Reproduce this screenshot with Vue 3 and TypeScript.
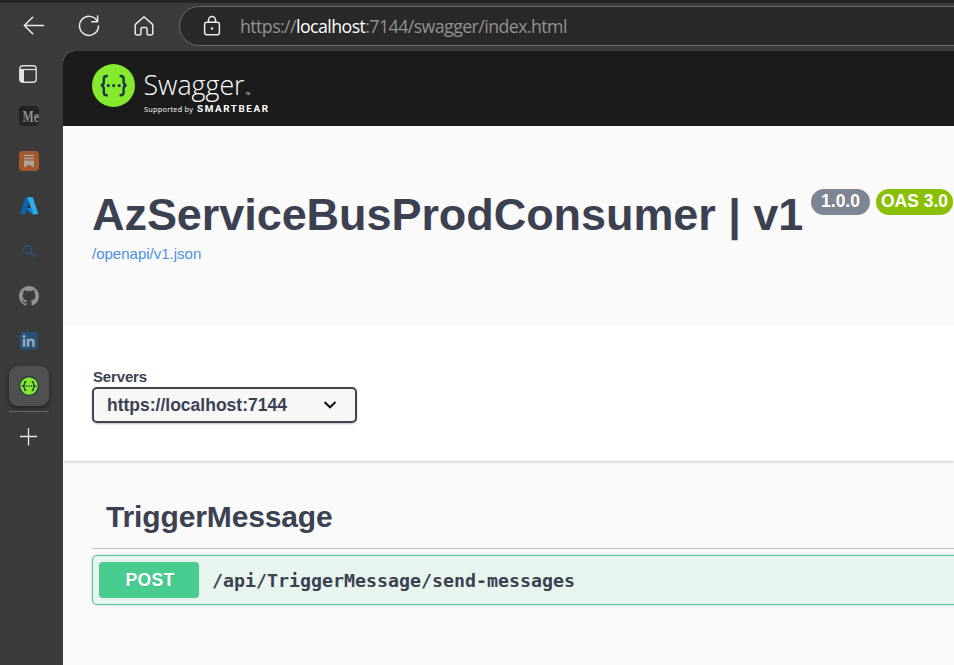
<script setup lang="ts">
interface Badge {
  label: string
  kind: string
}

const host = 'localhost'
const badges: Badge[] = [
  { label: '1.0.0', kind: 'version' },
  { label: 'OAS 3.0', kind: 'oas' },
]
const server = 'https://localhost:7144'
</script>

<template>
  <div class="browser">
    <header class="toolbar">
      <svg class="tool back" width="24" height="24" viewBox="0 0 24 24">
        <path d="M21.500 12.500H2.500M10.700 4.200 2.300 12.500l8.400 8.300" />
      </svg>
      <svg class="tool reload" width="24" height="24" viewBox="0 0 24 24">
        <path d="M20.3 8.2A9.500 9.500 0 1 0 21.500 13M20.600 3v5.800h-5.800" />
      </svg>
      <svg class="tool home" width="24" height="24" viewBox="0 0 24 24">
        <path d="M4.2 10.6 12 3.8l7.8 6.8c.7.6 1 1.3 1 2.2v7.4c0 1.1-.6 1.7-1.7 1.7h-2.5c-1 0-1.5-.6-1.5-1.5v-4.2c0-1.1-.6-1.7-1.7-1.7h-2.8c-1.1 0-1.7.6-1.7 1.7v4.2c0 .9-.5 1.5-1.5 1.5H4.9c-1.1 0-1.7-.6-1.7-1.7v-7.4c0-.9.3-1.6 1-2.2Z" />
      </svg>
      <div class="address">
        <svg class="tool lock" width="20" height="22" viewBox="0 0 20 22">
          <rect x="2.6" y="7.3" width="14.8" height="12.4" rx="2.2" />
          <path d="M6.5 7V5a3.5 3.5 0 0 1 7 0v2" />
          <circle class="dot" cx="10" cy="13.5" r="1.2" />
        </svg>
        <span class="url">https://<b>{{ host }}</b>:7144/swagger/index.html</span>
      </div>
    </header>

    <aside class="tabs">
      <svg class="tab" width="20" height="20" viewBox="0 0 20 20">
        <rect x="0.800" y="0.700" width="16.400" height="16.600" rx="3" fill="none" stroke="#dedede" stroke-width="1.4" />
        <path d="M1 4.500h16.200" stroke="#dedede" stroke-width="1.200" />
        <path d="M.800 4.500H5v13H3.200Q.8 17.500.8 15Z" fill="#e3e3e3" />
      </svg>
      <svg class="tab" width="20" height="20" viewBox="0 0 20 20">
        <rect width="20" height="20" rx="4" fill="#242424" />
        <text class="medium" x="3.500" y="15.500" textLength="16.500" lengthAdjust="spacingAndGlyphs">Me</text>
      </svg>
      <svg class="tab" width="20" height="20" viewBox="0 0 20 20">
        <rect width="20" height="20" rx="4" fill="#a6572d" />
        <path d="M5 4.6h10M5 7.4h10" stroke="#aaa39e" stroke-width="1.5" />
        <path d="M5 9.6h10v6.9l-5-2.8-5 2.8Z" fill="#aaa39e" />
      </svg>
      <svg class="tab" width="20" height="20" viewBox="0 0 20 20">
        <path d="M6.5 1.3h5.2L6 18.2H1.8c-.6 0-.9-.5-.7-1Z" fill="#0b62ad" />
        <path d="M6.8 12h8.3l1.3 6.2h-3Z" fill="#087bd0" />
        <path d="M8.2 1.3h5c.4 0 .7.2.8.6l5 15.1c.2.7-.1 1.2-.8 1.2h-4.9c.6 0 .9-.5.7-1.1Z" fill="#2daeea" />
        <path d="M6.8 12h5.4l1.7 5.1c.1.4 0 .8-.3 1Z" fill="#1480ce" />
      </svg>
      <svg class="tab" width="20" height="20" viewBox="0 0 20 20" fill="none" stroke="#28527a">
        <circle cx="8.400" cy="8.600" r="4" stroke-width="1.600" />
        <path d="m11.400 11.600 4.500 4.800" stroke-width="2" />
      </svg>
      <svg class="tab" width="20" height="20" viewBox="0 0 16 16">
        <path fill="#929292" d="M8 0C3.58 0 0 3.58 0 8c0 3.54 2.29 6.53 5.47 7.59.4.07.55-.17.55-.38 0-.19-.01-.82-.01-1.49-2.01.37-2.53-.49-2.69-.94-.09-.23-.48-.94-.82-1.13-.28-.15-.68-.52-.01-.53.63-.01 1.08.58 1.23.82.72 1.21 1.87.87 2.33.66.07-.52.28-.87.51-1.07-1.78-.2-3.64-.89-3.64-3.95 0-.87.31-1.59.82-2.15-.08-.2-.36-1.02.08-2.12 0 0 .67-.21 2.2.82a7.7 7.7 0 0 1 4 0c1.53-1.04 2.2-.82 2.2-.82.44 1.1.16 1.92.08 2.12.51.56.82 1.27.82 2.15 0 3.07-1.87 3.75-3.65 3.95.29.25.54.73.54 1.48 0 1.07-.01 1.93-.01 2.2 0 .21.15.46.55.38A8.01 8.01 0 0 0 16 8c0-4.42-3.58-8-8-8Z" />
      </svg>
      <svg class="tab" width="20" height="20" viewBox="0 0 20 20">
        <rect x="1" y="1" width="17.6" height="17.6" rx="1.6" fill="#27527e" />
        <path d="M3.8 7.8h2.5v8H3.8ZM7.8 7.8h2.4v1.1c1.2-2 5.5-1.9 5.5 1.9v5h-2.5v-4.3c0-2.4-2.9-2.2-2.9 0v4.3H7.8Z" fill="#9da6af" />
        <circle cx="5" cy="5.2" r="1.5" fill="#9da6af" />
      </svg>
      <div class="active-tab">
        <svg width="20" height="20" viewBox="0 0 44 44">
          <circle cx="22" cy="22" r="20.5" fill="#85ea2d" stroke="#173647" stroke-width="2.6" />
          <path class="braces" d="M16 12c-4 0-4 2-4 5s0 4-3 5c3 1 3 2 3 5s0 5 4 5M28 12c4 0 4 2 4 5s0 4 3 5c-3 1-3 2-3 5s0 5-4 5" />
          <path d="M15 22h3m2.500 0h3m2.500 0h3" stroke="#173647" stroke-width="3" />
        </svg>
      </div>
      <div class="separator"></div>
      <svg class="plus" width="20" height="20" viewBox="0 0 20 20">
        <path d="M1 9.500h17M9.500 1v17.500" stroke="#e6e6e6" stroke-width="1.300" />
      </svg>
    </aside>

    <main class="page">
      <div class="topbar">
        <svg width="190" height="75" viewBox="0 0 190 75">
          <circle cx="21.500" cy="34.500" r="21.500" fill="#85ea2d" />
          <path class="braces large" d="M15.800 25h-1.300c-2.200 0-2.700 1.300-2.700 3v3c0 2-.7 3-2.800 3.400 2.100.4 2.800 1.400 2.800 3.400v3.400c0 1.800.7 3 2.700 3h1.300M27.600 25h1.300c2.200 0 2.700 1.300 2.700 3v3c0 2 .7 3 2.800 3.400-2.100.4-2.800 1.400-2.800 3.400v3.400c0 1.800-.7 3-2.700 3h-1.300" />
          <g fill="#173647">
            <circle cx="16.200" cy="34.600" r="1.600" />
            <circle cx="21.700" cy="34.600" r="1.600" />
            <circle cx="27.200" cy="34.600" r="1.600" />
          </g>
          <text class="brand" x="51.500" y="43.500" textLength="101" lengthAdjust="spacingAndGlyphs">Swagger</text>
          <text class="tm" x="153.500" y="43.500" textLength="4.500">TM</text>
          <text class="support" x="52" y="60.500" textLength="49">Supported by</text>
          <text class="bear" x="105" y="60.800" textLength="71">SMARTBEAR</text>
        </svg>
      </div>

      <section class="info">
        <div class="heading">
          <h1>AzServiceBusProdConsumer | v1</h1>
          <span v-for="b in badges" :key="b.label" class="badge" :class="b.kind">{{ b.label }}</span>
        </div>
        <a class="spec">/openapi/v1.json</a>
      </section>

      <section class="servers">
        <label>Servers</label>
        <div class="select">
          <span>{{ server }}</span>
          <svg width="14" height="10" viewBox="0 0 14 10">
            <path d="m1.500 2 5.500 5.300L12.500 2" fill="none" stroke="#111" stroke-width="2" />
          </svg>
        </div>
      </section>

      <section class="operations">
        <h2>TriggerMessage</h2>
        <div class="operation">
          <span class="method">POST</span>
          <span class="path">/api/TriggerMessage/send-messages</span>
        </div>
      </section>
    </main>
  </div>
</template>

<style>
body {
  margin: 0;
  overflow: hidden;
}
</style>

<style scoped>
.browser {
  box-sizing: border-box;
  width: 954px;
  height: 665px;
  overflow: hidden;
  display: grid;
  grid-template: 48px 614px / 63px 891px;
  background: #3b3b3b;
  border-top: 3px solid #252525;
  font-family: "Liberation Sans", Arial, sans-serif;
  color: #3b4151;
}
.toolbar {
  grid-column: 1 / 3;
  display: flex;
  align-items: flex-start;
  padding-left: 22px;
  overflow: hidden;
}
.tool {
  flex: none;
  fill: none;
  stroke: #ececec;
  stroke-width: 1.5;
  stroke-linejoin: round;
  stroke-linecap: round;
}
.back, .reload, .home { margin-top: 10px; }
.reload { margin-left: 31px; }
.home { margin-left: 31px; }
.lock .dot { fill: #ececec; stroke: none; }
.address {
  box-sizing: border-box;
  flex: none;
  width: 830px;
  height: 40px;
  margin: 3px 0 0 23px;
  border: 1px solid #6b6b6b;
  border-radius: 20px;
  background: #292929;
  display: flex;
  align-items: center;
  padding-left: 22px;
}
.url {
  margin-left: 18px;
  font: 17.800px/26px "Open Sans", "Noto Sans", sans-serif;
  letter-spacing: -0.58px;
  color: #929292;
  white-space: nowrap;
}
.url b { font-weight: 400; color: #fff; }

.tabs {
  display: flex;
  flex-direction: column;
  align-items: center;
  padding: 14px 5px 0 0;
}
.tab {
  flex: none;
  width: 20px;
  height: 20px;
  margin-bottom: 25px;
}
.tab:first-child { margin-bottom: 21px; }
.medium {
  fill: #929292;
  font: bold 16px "Liberation Serif", serif;
}
.active-tab {
  flex: none;
  display: grid;
  place-items: center;
  width: 40px;
  height: 40px;
  margin-top: -10px;
  border-radius: 9px;
  background: #505050;
  box-shadow: 0 2px 4px #202020;
}
.braces {
  fill: none;
  stroke: #173647;
  stroke-width: 3;
}
.large { stroke-width: 2.400; }
.separator {
  flex: none;
  width: 40px;
  height: 1px;
  margin: 5px 0 15px;
  background: #666;
}
.page {
  border-radius: 12px 0 0;
  overflow: hidden;
  background: #fafafa;
}
.topbar {
  height: 75px;
  padding-left: 29px;
  background: #1b1b1b;
}
.topbar svg { display: block; }
.brand, .support, .tm {
  font-family: "Open Sans", "Noto Sans", sans-serif;
  fill: #fff;
}
.brand { font-size: 28px; font-weight: 350; }
.tm { font-size: 3px; }
.support { font-size: 7.300px; }
.bear {
  font: bold 9.900px Roboto, sans-serif;
  fill: #fff;
}
.info {
  box-sizing: border-box;
  height: 200px;
  padding: 63px 0 0 29px;
}
.heading {
  display: flex;
  align-items: flex-start;
  height: 52px;
}
h1, h2 { margin: 0; white-space: nowrap; }
h1 {
  flex: none;
  width: 719px;
  font-size: 45px;
  line-height: 52px;
  letter-spacing: -0.06px;
}
.badge {
  flex: none;
  box-sizing: border-box;
  height: 26px;
  border-radius: 13px;
  color: #fff;
  font-size: 17.500px;
  font-weight: 700;
  line-height: 25px;
  text-align: center;
  white-space: nowrap;
}
.version { width: 59px; background: #7d8492; }
.oas { width: 77px; margin-left: 6px; background: #89bf04; }
.spec {
  display: block;
  margin-top: 4px;
  font-size: 15px;
  line-height: 18px;
  color: #4990e2;
}
.servers {
  box-sizing: border-box;
  height: 135px;
  padding: 41px 0 0 29px;
  background: #fff;
  box-shadow: 0 1px 2px rgba(0, 0, 0, 0.2);
}
.servers label {
  display: block;
  padding: 0 0 1px 1px;
  font-size: 15px;
  font-weight: 700;
  line-height: 19px;
  letter-spacing: -0.15px;
}
.select {
  box-sizing: border-box;
  width: 265px;
  height: 36px;
  display: flex;
  align-items: center;
  justify-content: space-between;
  padding: 0 18px 0 13px;
  border: 2px solid #41444e;
  border-radius: 5px;
  background: #f7f7f7;
  box-shadow: 0 1px 2px rgba(0, 0, 0, 0.25);
  font-size: 17.500px;
  font-weight: 700;
}
.operations { padding: 30px 0 0 29px; }
h2 {
  box-sizing: border-box;
  height: 58px;
  padding-left: 14px;
  border-bottom: 1px solid #c0c1c4;
  font-size: 30px;
  line-height: 51px;
  letter-spacing: -0.13px;
}
.operation {
  box-sizing: border-box;
  width: 900px;
  height: 50px;
  margin-top: 6px;
  display: flex;
  align-items: center;
  padding-left: 6px;
  border: 1px solid #49cc90;
  border-radius: 5px;
  background: #e8f5ee;
  box-shadow: 0 0 3px rgba(0, 0, 0, 0.19);
}
.method {
  width: 100px;
  height: 36px;
  border-radius: 4px;
  background: #49cc90;
  color: #fff;
  font-size: 17.500px;
  font-weight: 700;
  line-height: 37px;
  letter-spacing: 0.3px;
  text-indent: 2px;
  text-align: center;
  text-shadow: 0 1px 0 rgba(0, 0, 0, 0.1);
}
.path {
  margin-left: 13px;
  padding-top: 2px;
  font: bold 18.270px/24px "DejaVu Sans Mono", monospace;
}
</style>
